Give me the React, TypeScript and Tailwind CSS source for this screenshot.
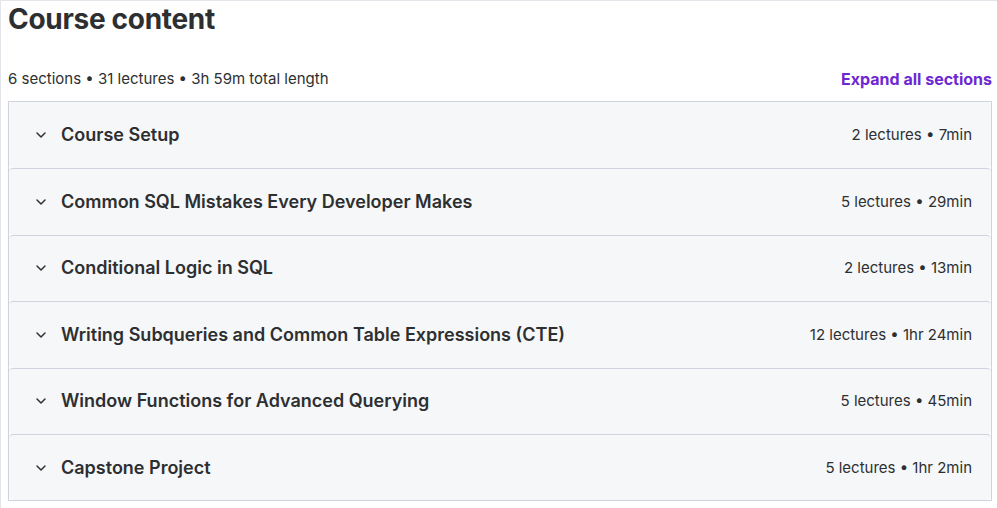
import { ChevronDown } from 'lucide-react'

const sections = [
  { title: 'Course Setup', meta: '2 lectures • 7min' },
  { title: 'Common SQL Mistakes Every Developer Makes', meta: '5 lectures • 29min' },
  { title: 'Conditional Logic in SQL', meta: '2 lectures • 13min' },
  { title: 'Writing Subqueries and Common Table Expressions (CTE)', meta: '12 lectures • 1hr 24min' },
  { title: 'Window Functions for Advanced Querying', meta: '5 lectures • 45min' },
  { title: 'Capstone Project', meta: '5 lectures • 1hr 2min' },
]

export default function App() {
  return (
    <div
      className="min-h-[508px] border-l border-t border-[#e4e5ea] bg-white pl-[7px] pr-[5px] text-[#2d2f31]"
      style={{ fontFamily: 'Inter, "Noto Sans", sans-serif' }}
    >
      <h2 className="m-0 pt-[2px] text-[28px] font-bold leading-[32px] tracking-[-0.3px]">Course content</h2>

      <div className="mt-[34px] flex items-center justify-between pb-[12px]">
        <span className="text-[15px] leading-[20px] text-[#2d2f31]">
          6 sections • 31 lectures • 3h 59m total length
        </span>
        <button type="button" className="cursor-pointer text-[16px] font-bold leading-[20px] text-[#6d28d2]">
          Expand all sections
        </button>
      </div>

      <div className="border border-[#d1d2e0]">
        {sections.map((s, i) => (
          <div
            key={s.title}
            className={`flex h-[66.4px] items-center rounded-[4px] bg-[#f6f7f9] pl-[24px] pr-[19px] ${
              i > 0 ? 'border-t border-[#d1d2e0]' : ''
            }`}
          >
            <ChevronDown className="h-[16px] w-[16px] text-[#2d2f31]" strokeWidth={2.2} />
            <span className="ml-[12px] flex-1 text-[18px] font-semibold leading-[22px]">{s.title}</span>
            <span className="text-[15px] leading-[20px] text-[#2d2f31]">{s.meta}</span>
          </div>
        ))}
      </div>
    </div>
  )
}
